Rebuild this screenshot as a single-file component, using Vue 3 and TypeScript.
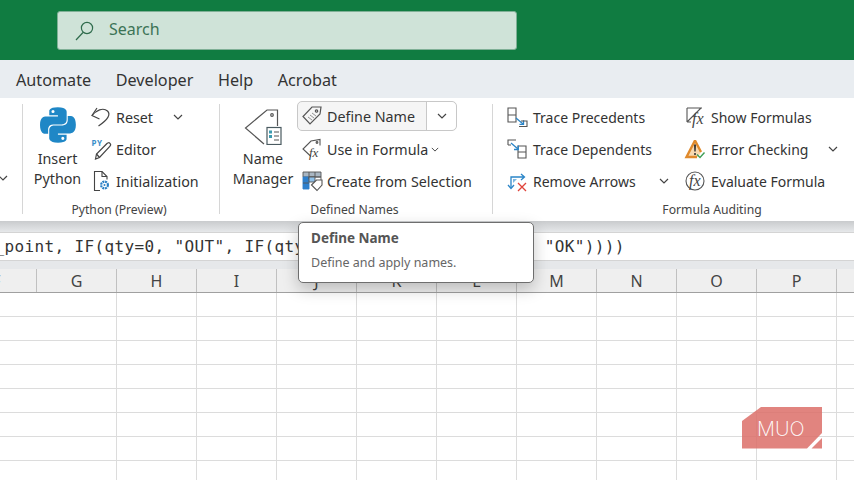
<template>
  <div class="app">
    <header class="titlebar">
      <div class="search">
        <svg class="search-icon" width="24" height="24" viewBox="0 0 24 24" fill="none" stroke="#2f6b4c" stroke-width="1.2">
          <circle cx="14" cy="9" r="5.6" />
          <path d="M10 13.5 3 21" />
        </svg>
        <span>Search</span>
      </div>
    </header>

    <nav class="tabs">
      <span v-for="t in tabs" :key="t">{{ t }}</span>
    </nav>

    <section class="ribbon">
      <div class="group stub">
        <svg class="chev" width="10" height="6" viewBox="0 0 10 6"><path d="M1 1l4 4 4-4" /></svg>
      </div>

      <div class="group python">
        <div class="group-body">
          <div class="big py-big">
            <svg width="36" height="36" viewBox="0 0 111 111" fill="#1f87c6">
              <path d="M54.9.4c-28 0-26.3 12.2-26.3 12.2v12.6h26.7v3.8H18S0 26.8 0 55.2s15.7 27.3 15.7 27.3h9.4V69.3s-.5-15.7 15.5-15.7h26.6s15-.2 15-14.5V15.3S84.6.4 54.9.4zM40.1 8.9a4.8 4.8 0 1 1 0 9.6 4.8 4.8 0 0 1 0-9.6z" />
              <path d="M55.7 110c28 0 26.3-12.2 26.3-12.2V85.2H55.3v-3.8h37.3s18 2 18-26.3-15.7-27.3-15.7-27.3h-9.4V41s.5 15.7-15.5 15.7H43.4s-15 .2-15 14.5v23.7S26 110 55.7 110zm14.7-8.5a4.8 4.8 0 1 1 0-9.6 4.8 4.8 0 0 1 0 9.6z" />
            </svg>
            <span class="big-label">Insert<br />Python</span>
          </div>
          <div class="col">
            <div class="row">
              <svg class="ico" viewBox="0 0 20 20" fill="none" stroke="#444" stroke-width="1.2">
                <path d="M6 1 1 8.5l7.500 3.500" />
                <path d="M1 8.500C5 3.500 12 0 16.500 4c3.500 3.500.5 8.500-9 15" />
              </svg>
              <span>Reset</span>
              <svg class="chev reset-chev" width="10" height="6" viewBox="0 0 10 6"><path d="M1 1l4 4 4-4" /></svg>
            </div>
            <div class="row">
              <svg class="ico" viewBox="0 0 20 20" fill="none" stroke="#444" stroke-width="1.200">
                <text x="0.500" y="7" class="py-mark">PY</text>
                <path d="M4.500 20l1-5L16 4.500c1-1 2.200-1 3-.2s.8 2-.2 3L8.500 18.500z" />
                <path d="M5.500 15l3 3.500" />
              </svg>
              <span>Editor</span>
            </div>
            <div class="row">
              <svg class="ico" viewBox="0 0 20 20" fill="none" stroke="#444" stroke-width="1.100">
                <path d="M9 19.500H3.500v-19H11l5 5v3" />
                <path d="M11 .5v5h5" />
                <circle cx="13.500" cy="14" r="3.400" stroke="#2a7fc4" stroke-width="2.200" stroke-dasharray="2 .7" />
                <circle cx="13.500" cy="14" r="1" fill="#2a7fc4" stroke="none" />
              </svg>
              <span>Initialization</span>
            </div>
          </div>
        </div>
        <div class="group-label">Python (Preview)</div>
      </div>

      <div class="group names">
        <div class="group-body">
          <div class="big nm-big">
            <svg width="38" height="36" viewBox="0 0 38 36" fill="none" stroke="#555" stroke-width="1.200">
              <path d="M20 35 1.500 19 23 1h10.500v16" />
              <circle cx="28" cy="6" r="1.300" />
              <rect x="23" y="18.500" width="14" height="17" fill="#fff" stroke="#4a5a60" />
              <path d="M30 23h5M30 27h5M30 31h5" stroke="#555" />
              <path d="M25 21.500h3v3h-3zM25 26h3v3h-3z" fill="#3d9bb0" stroke="none" />
            </svg>
            <span class="big-label">Name<br />Manager</span>
          </div>
          <div class="col names-col">
            <div class="row define">
              <div class="define-main">
                <svg class="ico" viewBox="0 0 20 20" fill="none" stroke="#555" stroke-width="1.200">
                  <path d="M19 1h-9L1 10.500 8 18l10-10z" />
                  <circle cx="14.500" cy="5" r="1.200" />
                  <path d="M6 11l4 3M8 9l4 3M10 7l4 3" stroke="#888" stroke-width=".9" />
                </svg>
                <span>Define Name</span>
              </div>
              <div class="define-drop">
                <svg class="chev" width="10" height="6" viewBox="0 0 10 6"><path d="M1 1l4 4 4-4" /></svg>
              </div>
            </div>
            <div class="row">
              <svg class="ico" viewBox="0 0 20 20" fill="none" stroke="#555" stroke-width="1.100">
                <path d="M9 17.500 1 10 9 2l9-1.500v6" />
                <circle cx="15" cy="3.500" r=".9" />
                <text x="7" y="18" class="fx fx-small">fx</text>
              </svg>
              <span>Use in Formula</span>
              <svg class="chev uf-chev" width="8" height="5" viewBox="0 0 10 6"><path d="M1 1l4 4 4-4" /></svg>
            </div>
            <div class="row">
              <svg class="ico" viewBox="0 0 20 20" fill="none" stroke="#555" stroke-width=".9">
                <path d="M1 1h18v5H1z" fill="#a9b6c2" />
                <path d="M1 6h6v12H1z" fill="#2f80cc" stroke="#2f80cc" />
                <path d="M7 1v7M13 1v5M7 6h12v5M1 12h6" />
                <path d="M7 6h6v5H7z" fill="#8fc0e8" />
                <path d="M9.500 14 14.500 9H20v5l-5 5.500z" fill="#fff" stroke="#555" stroke-width="1.100" />
              </svg>
              <span>Create from Selection</span>
            </div>
          </div>
        </div>
        <div class="group-label">Defined Names</div>
      </div>

      <div class="group auditing">
        <div class="group-body">
          <div class="col audit-a">
            <div class="row">
              <svg class="ico" viewBox="0 0 20 20" fill="none" stroke="#555" stroke-width="1.100">
                <path d="M1 1h8v14H1zM1 8h8" />
                <path d="M9 11l7 6" stroke="#2a85c8" stroke-width="1.300" />
                <path d="M12.500 17.300h4v-4" stroke="#2a85c8" stroke-width="1.300" />
                <path d="M14 14h6v5.500h-8" />
              </svg>
              <span>Trace Precedents</span>
            </div>
            <div class="row">
              <svg class="ico" viewBox="0 0 20 20" fill="none" stroke="#555" stroke-width="1.100">
                <path d="M1 6V1h8M1 6h3" />
                <path d="M11 7h8v12h-8zM11 13h8" />
                <path d="M4 4l7 6" stroke="#2a85c8" stroke-width="1.300" />
                <path d="M7 10.500h4.300V6.500" stroke="#2a85c8" stroke-width="1.300" />
              </svg>
              <span>Trace Dependents</span>
            </div>
            <div class="row">
              <svg class="ico" viewBox="0 0 20 20" fill="none" stroke="#2a85c8" stroke-width="1.300">
                <path d="M4 17V6h13M14 3l3.500 3-3.500 3" />
                <path d="M1 14l3 3.500L7 14" />
                <path d="M6 10V8h4l-4 4z" fill="#7db7e0" stroke="none" />
                <path d="M11 12l8 8M19 12l-8 8" stroke="#e0433a" />
              </svg>
              <span>Remove Arrows</span>
              <svg class="chev ra-chev" width="10" height="6" viewBox="0 0 10 6"><path d="M1 1l4 4 4-4" /></svg>
            </div>
          </div>
          <div class="col audit-b">
            <div class="row">
              <svg class="ico" viewBox="0 0 20 20" fill="none" stroke="#555" stroke-width="1.100">
                <path d="M2 1h15M2 1v14M2 15 16 1M2 15h4" />
                <text x="7" y="17" class="fx">fx</text>
              </svg>
              <span>Show Formulas</span>
            </div>
            <div class="row">
              <svg class="ico" viewBox="0 0 20 20" fill="none">
                <path d="M10 1.500 1.500 18H13L16 13z" fill="#f7d9b0" />
                <path d="M10 1.500 1.500 18H12M10 1.500 16 13" stroke="#e08a2c" stroke-width="2.400" />
                <path d="M9 5.500h2l-.3 7h-1.400zM9.200 14h1.600v2H9.200z" fill="#333" />
                <path d="M12 15.500l3 3 4.500-5" stroke="#3f9e57" stroke-width="1.400" />
              </svg>
              <span>Error Checking</span>
              <svg class="chev ec-chev" width="10" height="6" viewBox="0 0 10 6"><path d="M1 1l4 4 4-4" /></svg>
            </div>
            <div class="row">
              <svg class="ico" viewBox="0 0 20 20" fill="none" stroke="#555" stroke-width="1.100">
                <circle cx="10" cy="10" r="9" />
                <text x="4" y="14.500" class="fx">fx</text>
              </svg>
              <span>Evaluate Formula</span>
            </div>
          </div>
        </div>
        <div class="group-label">Formula Auditing</div>
      </div>
    </section>

    <div class="gap-top"></div>
    <div class="formula">_point, IF(qty=0, "OUT", IF(qty&lt;=reorder_point, "LOW", "OK"))))</div>
    <div class="gap-bottom"></div>

    <div class="col-heads">
      <div class="head partial">F</div>
      <div v-for="c in columns" :key="c" class="head">{{ c }}</div>
      <div class="head"></div>
    </div>
    <div class="sheet"></div>

    <div class="tooltip">
      <div class="tip-title">Define Name</div>
      <div class="tip-text">Define and apply names.</div>
    </div>

    <svg class="logo" width="82" height="42" viewBox="0 0 82 42">
      <path d="M20 0h61v26L66 41.500H1V14z" fill="#dc6f69" fill-opacity=".85" />
      <path d="M70.500 41.500 81 31v10.500z" fill="#dc6f69" fill-opacity=".85" />
      <text x="16" y="29" class="logo-text">MUO</text>
    </svg>
  </div>
</template>

<script setup lang="ts">
const tabs: string[] = ['Automate', 'Developer', 'Help', 'Acrobat']
const columns: string[] = ['G', 'H', 'I', 'J', 'K', 'L', 'M', 'N', 'O', 'P']
</script>

<style>
html,
body {
  margin: 0;
  overflow: hidden;
}
</style>

<style scoped>
.app {
  position: relative;
  display: flex;
  flex-direction: column;
  width: 854px;
  height: 480px;
  overflow: hidden;
  background: #fff;
  color: #333;
  font-family: "Noto Sans", "Open Sans", sans-serif;
}

.titlebar {
  flex: none;
  height: 60px;
  padding: 11px 0 0 57px;
  box-sizing: border-box;
  background: #107c41;
}

.search {
  display: flex;
  align-items: center;
  width: 460px;
  height: 39px;
  box-sizing: border-box;
  padding-left: 15px;
  gap: 12px;
  border: 1px solid #7fb096;
  border-radius: 3px;
  background: #cfe3d8;
  color: #3c7356;
  font-size: 16px;
}

.search span {
  margin-top: -3px;
}

.tabs {
  flex: none;
  display: flex;
  align-items: center;
  gap: 24.500px;
  height: 38px;
  padding-left: 16px;
  background: #e9edf1;
  font-size: 16.200px;
}

.tabs span {
  margin-top: 1px;
}

.ribbon {
  flex: none;
  display: flex;
  height: 123px;
  background: #fff;
  font-size: 14.300px;
}

.group {
  display: flex;
  flex-direction: column;
  box-sizing: border-box;
  margin-top: 6px;
  height: 110px;
  border-right: 1px solid #d6d6d6;
}

.stub {
  width: 23px;
  position: relative;
}

.stub .chev {
  position: absolute;
  left: -2px;
  top: 71px;
}

.python {
  width: 197px;
  padding-left: 7px;
}

.names {
  width: 273px;
  padding-left: 13px;
}

.auditing {
  flex: 1;
  border-right: 0;
  padding-left: 14px;
  font-size: 14px;
}

.group-body {
  flex: 1;
  display: flex;
  margin-top: -3px;
}

.group-label {
  height: 16px;
  line-height: 24px;
  text-align: center;
  font-size: 12.200px;
  color: #444;
}

.python .group-label {
  margin-left: -11px;
}

.names .group-label {
  margin-right: 56px;
  margin-left: 40px;
}

.auditing .group-label {
  padding-left: 63px;
}

.big {
  display: flex;
  flex-direction: column;
  align-items: center;
  flex: none;
  text-align: center;
}

.py-big {
  width: 55px;
  padding-top: 6px;
}

.nm-big {
  width: 60px;
  padding-top: 8px;
  margin-right: 4px;
}

.big-label {
  margin-top: 6px;
  line-height: 20px;
}

.nm-big .big-label {
  margin-top: 4px;
}

.col {
  display: flex;
  flex-direction: column;
  padding-left: 6px;
}

.row {
  display: flex;
  align-items: center;
  height: 32px;
  gap: 5px;
  white-space: nowrap;
}

.auditing .row {
  gap: 6px;
}

.ico {
  flex: none;
  width: 20px;
  height: 20px;
  overflow: visible;
}

.names-col {
  padding-left: 0;
}

.names-col > .row {
  padding-left: 5px;
}

.names-col > .row.define {
  padding-left: 0;
  width: 160px;
  height: 30px;
  margin-bottom: 2px;
  box-sizing: border-box;
  border: 1px solid #c8c8c8;
  border-radius: 5px;
  gap: 0;
  background: #f5f5f5;
}

.define-main {
  display: flex;
  align-items: center;
  gap: 5px;
  width: 129px;
  height: 100%;
  padding-left: 4px;
  box-sizing: border-box;
  border-right: 1px solid #c8c8c8;
}

.define-drop {
  flex: 1;
  display: flex;
  justify-content: center;
  background: #fff;
  height: 100%;
  align-items: center;
  border-radius: 0 5px 5px 0;
}

.chev {
  flex: none;
  fill: none;
  stroke: #444;
  stroke-width: 1.200;
}

.reset-chev {
  margin-left: 15px;
}

.uf-chev {
  margin-left: -2px;
}

.ra-chev {
  margin-left: 17px;
}

.ec-chev {
  margin-left: 14px;
}

.audit-a {
  width: 178px;
  padding-left: 0;
}

.audit-b {
  padding-left: 0;
}

.py-mark {
  font: bold 8px "Noto Sans", sans-serif;
  letter-spacing: .5px;
  fill: #3a8ec9;
  stroke: none;
}

.fx {
  font: italic 16px "Liberation Serif", serif;
  fill: #444;
  stroke: none;
}

.fx-small {
  font-size: 13px;
}

.gap-top {
  flex: none;
  height: 11px;
  background: linear-gradient(#c9cbcd, #e6e8ea);
}

.formula {
  flex: none;
  height: 29px;
  line-height: 27px;
  box-sizing: border-box;
  text-indent: -5.500px;
  background: #fff;
  border-top: 1px solid #d4d4d4;
  border-bottom: 1px solid #d4d4d4;
  font-family: "DejaVu Sans Mono", monospace;
  font-size: 16px;
  letter-spacing: .37px;
  color: #333;
  white-space: nowrap;
  overflow: hidden;
}

.gap-bottom {
  flex: none;
  height: 8px;
  background: #e6e8ea;
}

.col-heads {
  flex: none;
  display: flex;
  height: 24px;
  box-sizing: border-box;
  background: #efefef;
  border-bottom: 1px solid #a0a0a0;
  font-size: 16px;
  color: #444;
}

.head {
  flex: none;
  width: 80px;
  box-sizing: border-box;
  border-right: 1px solid #c0c0c0;
  text-align: center;
  line-height: 24px;
}

.head.partial {
  margin-left: -43px;
  color: #888;
}

.sheet {
  flex: 1;
  background-color: #fff;
  background-image:
    repeating-linear-gradient(to right, transparent 0 79px, #dcdcdc 79px 80px),
    repeating-linear-gradient(to bottom, transparent 0 23px, #dcdcdc 23px 24px);
  background-position: 37px 0, 0 0;
}

.tooltip {
  position: absolute;
  left: 298px;
  top: 222px;
  width: 236px;
  height: 61px;
  box-sizing: border-box;
  padding: 6px 12px;
  background: #fff;
  border: 1px solid #6e6e6e;
  border-radius: 5px;
  box-shadow: 0 6px 16px rgba(0, 0, 0, 0.22);
  font-size: 12.500px;
  color: #666;
}

.tip-title {
  font-size: 13.500px;
  font-weight: 700;
  color: #555;
  line-height: 18px;
}

.tip-text {
  margin-top: 7px;
  line-height: 18px;
}

.logo {
  position: absolute;
  left: 741px;
  top: 407px;
}

.logo-text {
  font: 200 20px Inter, sans-serif;
  fill: #fff;
}
</style>
